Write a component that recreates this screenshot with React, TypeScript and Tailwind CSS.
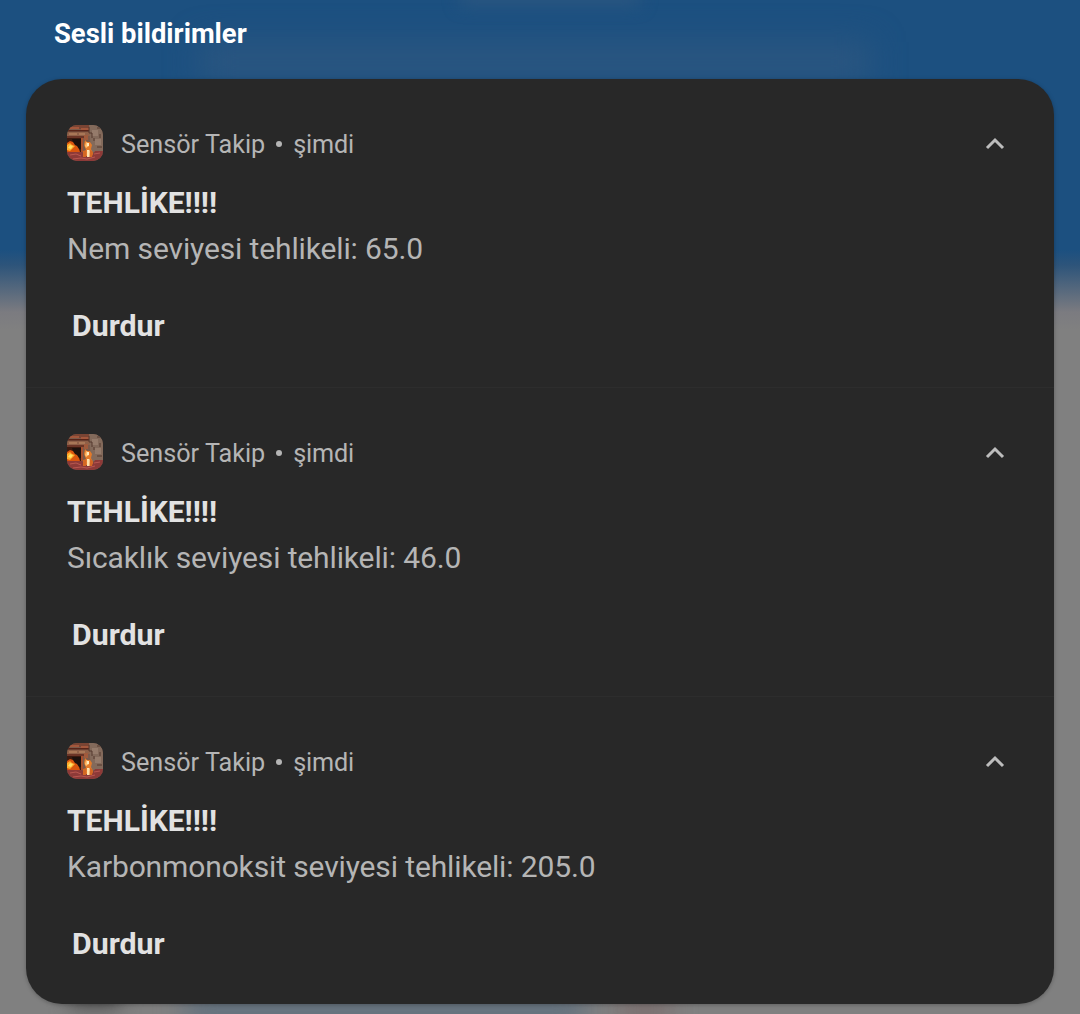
const alerts = [
  'Nem seviyesi tehlikeli: 65.0',
  'Sıcaklık seviyesi tehlikeli: 46.0',
  'Karbonmonoksit seviyesi tehlikeli: 205.0',
];

function AppIcon() {
  return (
    <svg viewBox="0 0 36 36" className="h-9 w-9 shrink-0 overflow-hidden rounded-[10px]">
      <rect width="36" height="36" fill="#7a5a4a" />
      <path d="M0 0h23v4H0z" fill="#7a4433" />
      <path d="M3 2h9v2H3zM14 3h8v2h-8z" fill="#a3573c" />
      <path d="M1 5h21v1.500H1z" fill="#5a2418" />
      <path d="M0 7h23v4H0z" fill="#8f6048" />
      <path d="M2 8h8v2H2zM12 8h6v2h-6z" fill="#a97757" />
      <path d="M0 11h17v2H0z" fill="#6b3527" />
      <path d="M22 0h14v27H24z" fill="#836a5b" />
      <path d="M25 5h6v6h-6zM28 14h6v6h-6z" fill="#957b6b" />
      <path d="M22 2v6h3v5M30 3h5M33 9v4M27 13v3M30 22h5" fill="none" stroke="#54392f" />
      <path d="M17 10h4v5h-4z" fill="#a05a3c" />
      <path d="M0 13h15v14H0z" fill="#3a1a10" />
      <path d="M5 14h9v10H8z" fill="#1c110d" />
      <path d="M0 27v-9l3-2 3 1 2 3 2 1 2 3 1 3z" fill="#d9560f" />
      <path d="M0 25v-5l3-2 2 2 3 1-3 3-2 2z" fill="#ffae2b" />
      <path d="M1 23l2-3 3 1-2 3z" fill="#ffe06a" />
      <path d="M14 13h2v14h-2z" fill="#a84f2d" />
      <path d="M17 20l1-5 2 2 3 0 2 3-1 4 2 4-1 5h-6l-2-3 2-5z" fill="#e37a2a" />
      <path d="M19 17l2 1 1 3-3 2-1-2z" fill="#ffc070" />
      <path d="M20 18h2v3h-2zM20 25h2.500v6H20z" fill="#ffe9bd" />
      <path d="M0 27h15l3 4h7l3-5h8v10H0z" fill="#8d3a38" />
      <path d="M16 26l3-1v7h-3zM23 25l3 2-1 5h-3z" fill="#d46723" />
      <path d="M20 26h2.500v6H20z" fill="#ffe0ab" />
      <path d="M3 30l6-1 5 2M6 34l8-1 6 1 8-2M27 29l6-1" fill="none" stroke="#b95850" />
    </svg>
  );
}

function Notification({ message }: { message: string }) {
  return (
    <article className="flex h-[309px] flex-col items-start border-b border-[#2d2d2d] pl-[41px] pr-[46px] pt-[44px] last:h-[307px] last:border-b-0">
      <header className="flex h-10 w-full items-center text-[25.2px] text-[#b5b5b5]">
        <AppIcon />
        <span className="ml-[18px] pt-[3px]">Sensör Takip</span>
        <span className="mx-[11px] mt-px h-[6px] w-[6px] rounded-full bg-[#b5b5b5]" />
        <span className="pt-[3px] tracking-[-0.15px]">şimdi</span>
        <button aria-label="Daralt" className="ml-auto">
          <svg viewBox="0 0 26 26" className="h-[26px] w-[26px]" fill="none" stroke="#bdbdbd" strokeWidth="3">
            <path d="M5 18l8-8 8 8" />
          </svg>
        </button>
      </header>
      <h2 className="mt-5 text-[30px] leading-10 font-bold text-[#e2e2e2]">TEHLİKE!!!!</h2>
      <p className="mt-[6px] text-[30px] leading-10 tracking-[-0.13px] text-[#b5b5b5]">{message}</p>
      <button className="ml-[5px] mt-[37px] text-[30.3px] leading-10 font-bold text-[#e2e2e2]">Durdur</button>
    </article>
  );
}

export default function App() {
  return (
    <main className="relative isolate flex h-[1014px] w-[1080px] flex-col overflow-hidden bg-[linear-gradient(to_bottom,#1c5080_0,#1c5080_250px,#2d547a_265px,#7b7b80_312px,#808080_330px)] px-[26px] font-[Roboto,sans-serif]">
      <div className="absolute left-[200px] top-[42px] -z-10 h-[40px] w-[670px] bg-[#2b5680] blur-[16px]" />
      <div className="absolute left-[460px] -top-[10px] -z-10 h-[16px] w-[180px] bg-[#2b5680] blur-[8px]" />
      <div className="absolute left-[70px] top-[975px] -z-10 h-[32px] w-[50px] bg-[#4b4b4b] blur-[10px]" />
      <div className="absolute left-[185px] top-[990px] -z-10 h-[40px] w-[400px] bg-[#63717e] blur-[14px]" />
      <div className="absolute left-[620px] top-[995px] -z-10 h-[30px] w-[50px] bg-[#7c6f6f] blur-[12px]" />
      <h1 className="h-[79px] pl-7 pt-[14px] text-[27.4px] leading-10 font-bold text-white">Sesli bildirimler</h1>
      <section className="flex h-[925px] flex-col overflow-hidden rounded-[36px] bg-[#282828] shadow-[0_1px_4px_#0004]">
        {alerts.map((message) => (
          <Notification key={message} message={message} />
        ))}
      </section>
    </main>
  );
}
